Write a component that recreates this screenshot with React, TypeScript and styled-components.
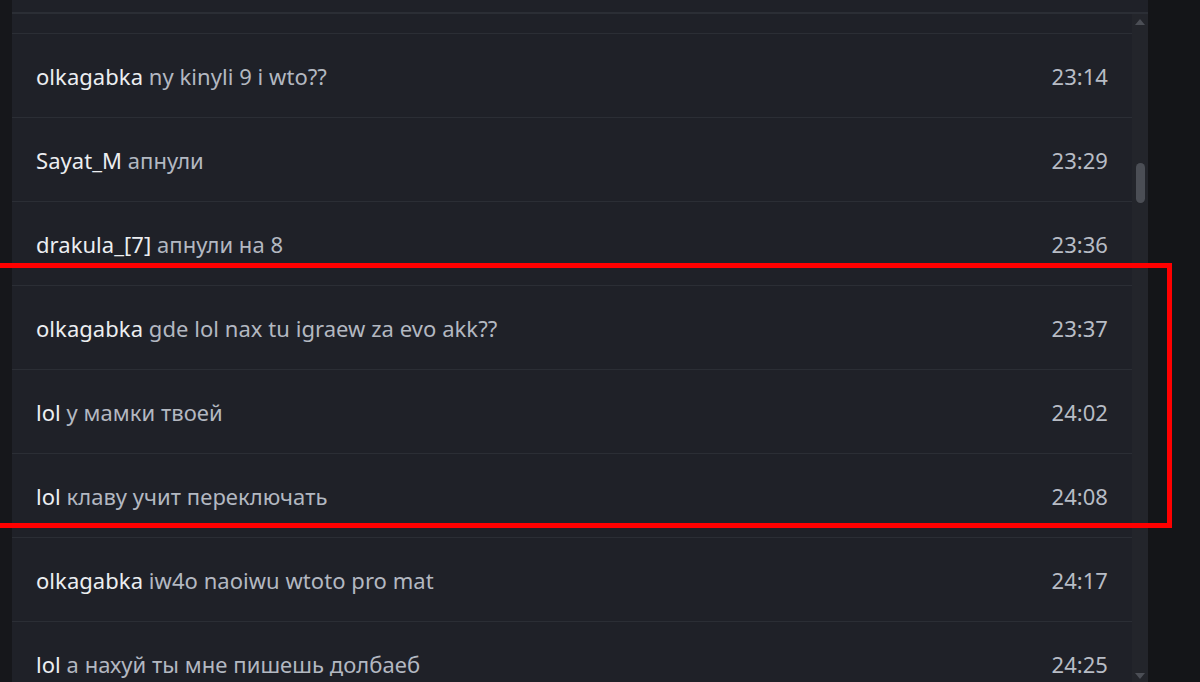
import React from "react";
import styled, { createGlobalStyle } from "styled-components";

type MessageType = {
  user: string;
  text: string;
  time: string;
};

const messages: MessageType[] = [
  { user: "olkagabka", text: "ny kinyli 9 i wto??", time: "23:14" },
  { user: "Sayat_M", text: "апнули", time: "23:29" },
  { user: "drakula_[7]", text: "апнули на 8", time: "23:36" },
  { user: "olkagabka", text: "gde lol nax tu igraew za evo akk??", time: "23:37" },
  { user: "lol", text: "у мамки твоей", time: "24:02" },
  { user: "lol", text: "клаву учит переключать", time: "24:08" },
  { user: "olkagabka", text: "iw4o naoiwu wtoto pro mat", time: "24:17" },
  { user: "lol", text: "а нахуй ты мне пишешь долбаеб", time: "24:25" },
];

const GlobalStyle = createGlobalStyle`
  html, body {
    margin: 0;
    padding: 0;
    background: #16171b;
    overflow: hidden;
  }
  body {
    font-family: "Noto Sans", "Open Sans", sans-serif;
  }
`;

export default function App() {
  return (
    <>
      <GlobalStyle />
      <Page>
        <LeftStrip />
        <Panel>
          <TopGap />
          <Body>
            <List>
              <CutRow />
              {messages.map((m, i) => (
                <Row key={i}>
                  <Line>
                    <User>{m.user}</User> <Text>{m.text}</Text>
                  </Line>
                  <Time>{m.time}</Time>
                </Row>
              ))}
            </List>
            <ScrollTrack>
              <Arrow $up />
              <Thumb />
              <Arrow />
            </ScrollTrack>
          </Body>
        </Panel>
        <RightSide />
        <Highlight />
      </Page>
    </>
  );
}

const Page = styled.div`
  position: relative;
  display: flex;
  width: 1200px;
  height: 682px;
  overflow: hidden;
`;

const LeftStrip = styled.div`
  width: 12px;
  flex-shrink: 0;
  background: #16171b;
`;

const Panel = styled.div`
  width: 1136px;
  flex-shrink: 0;
  display: flex;
  flex-direction: column;
  background: #1f2128;
`;

const TopGap = styled.div`
  height: 12px;
  flex-shrink: 0;
  border-bottom: 2px solid #2b2e35;
`;

const Body = styled.div`
  flex: 1;
  display: flex;
  min-height: 0;
`;

const List = styled.div`
  width: 1120px;
  display: flex;
  flex-direction: column;
`;

const CutRow = styled.div`
  height: 19px;
  flex-shrink: 0;
  border-bottom: 1px solid #2b2e35;
`;

const Row = styled.div`
  height: 83px;
  flex-shrink: 0;
  display: flex;
  align-items: center;
  justify-content: space-between;
  padding: 0 24px;
  border-bottom: 1px solid #2b2e35;
  font-size: 22px;
  letter-spacing: 0.05px;
`;

const Line = styled.div`
  white-space: nowrap;
`;

const User = styled.span`
  color: #eceef1;
`;

const Text = styled.span`
  color: #b3b8c1;
`;

const Time = styled.span`
  color: #b7bcc5;
`;

const ScrollTrack = styled.div`
  position: relative;
  width: 16px;
  background: #23252b;
`;

const Arrow = styled.div<{ $up?: boolean }>`
  position: absolute;
  left: 3px;
  width: 0;
  height: 0;
  border-left: 5px solid transparent;
  border-right: 5px solid transparent;
  ${(p) =>
    p.$up
      ? "top: 5px; border-bottom: 6px solid #4b4e55;"
      : "bottom: 3px; border-top: 6px solid #4b4e55;"}
`;

const Thumb = styled.div`
  position: absolute;
  top: 149px;
  left: 4px;
  width: 9px;
  height: 40px;
  border-radius: 5px;
  background: #4b4e55;
`;

const RightSide = styled.div`
  flex: 1;
  background: #141518;
`;

const Highlight = styled.div`
  position: absolute;
  left: -10px;
  top: 263px;
  width: 1172px;
  height: 255px;
  border: 5px solid #ff0000;
  pointer-events: none;
`;
